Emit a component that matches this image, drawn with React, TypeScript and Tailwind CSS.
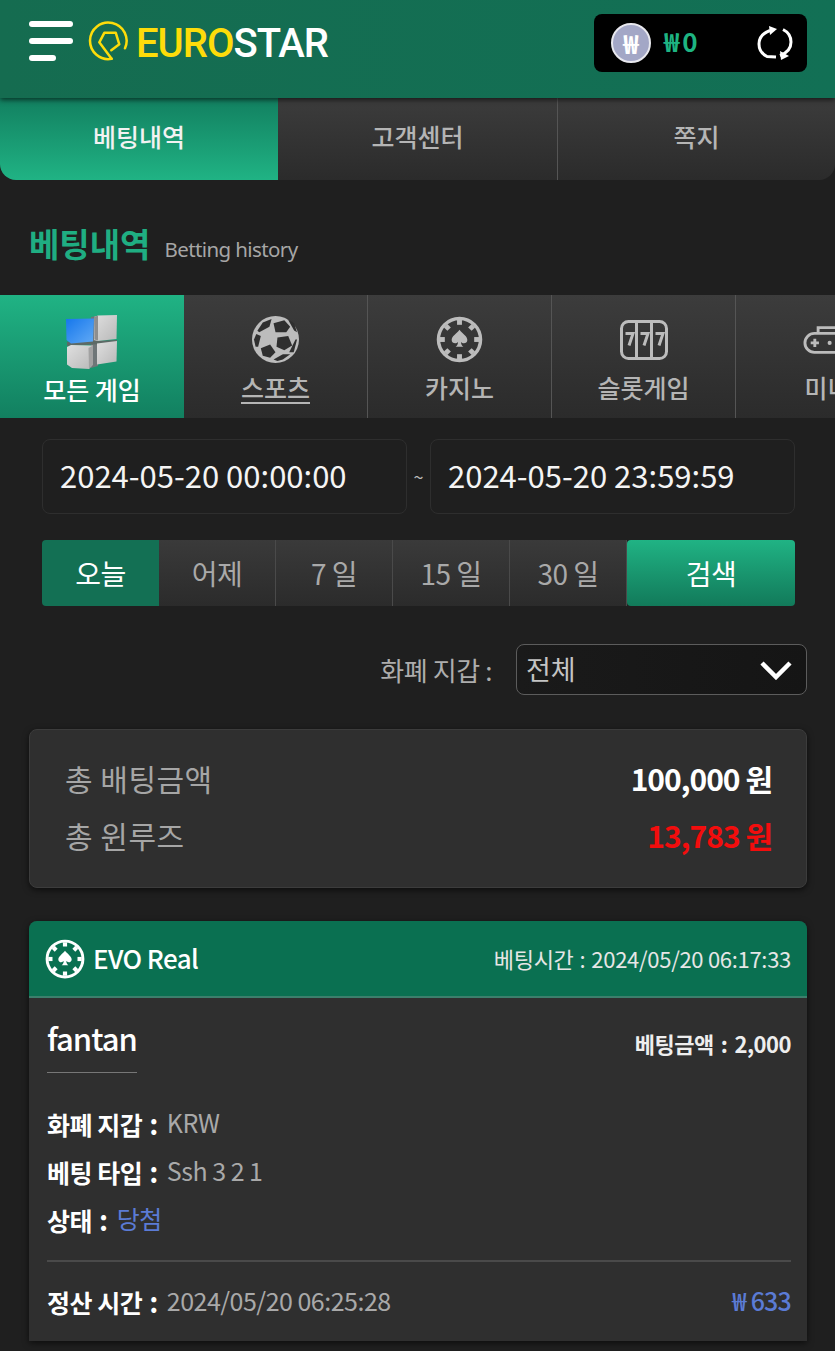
import React from 'react';

const font = { fontFamily: '"Noto Sans CJK KR", "Noto Sans", sans-serif' };

const ChipIcon: React.FC<{ className?: string }> = ({ className }) => (
    <svg viewBox="0 0 48 48" className={className} fill="none">
        <circle cx="24" cy="24" r="21.500" stroke="currentColor" strokeWidth="3.500" />
        {[0, 45, 90, 135, 180, 225, 270, 315].map(deg => (
            <rect key={deg} x="21.500" y="4" width="5" height="5" fill="currentColor" transform={`rotate(${deg} 24 24)`} />
        ))}
        <path d="M24 14c3 4 8 6.500 8 10.500 0 3.500-4.500 4.500-6.500 2 .2 2.500 1 4 2.500 5h-8c1.500-1 2.300-2.500 2.500-5-2 2.500-6.500 1.500-6.500-2C16 20.500 21 18 24 14z" fill="currentColor" />
    </svg>
);

const SoccerIcon = () => (
    <svg viewBox="0 0 48 48" className="w-[47px] h-[47px] text-[#bcbcbc]">
        <circle cx="24" cy="24" r="24" fill="currentColor" />
        <g fill="#2f2f2f">
            <path d="M22 7.400L33 4.400l6 6.600-4 5.700H24z" />
            <path d="M5.500 15L11 6.700 20 3l-2.200 8-10.400 5.700z" />
            <path d="M26 22l11-1.600L41 30l-8 5-8-3.500z" />
            <path d="M9 33l9.500-4L24 37l-5.500 5.600L11 40.700z" />
            <path d="M2 24l2.400-5.500L9 20.400 6.300 31.500H3.700z" />
            <path d="M35 2l8 5.400 3 9.300-3-2-6-10.500z" />
            <path d="M44.400 24H46l-3.400 13H38z" />
            <path d="M22 44.400L31.500 39H39l-7.500 5.400L26 46z" />
        </g>
    </svg>
);

const SlotIcon = () => (
    <svg viewBox="0 0 48 40" className="w-[48px] h-[40px] text-[#bcbcbc]" fill="none">
        <rect x="1.500" y="1.500" width="45" height="37" rx="7" stroke="currentColor" strokeWidth="3" />
        <path d="M16.500 2v36M31.500 2v36" stroke="currentColor" strokeWidth="3" />
        <path d="M5.500 13.500h7.500l-4 12M20.500 13.500h7.500l-4 12M35.500 13.500h7.500l-4 12" stroke="currentColor" strokeWidth="3" />
    </svg>
);

const PadIcon = () => (
    <svg viewBox="0 0 60 34" className="w-[50px] h-[28px] text-[#bcbcbc]" fill="none">
        <rect x="2" y="9" width="56" height="23" rx="11.500" stroke="currentColor" strokeWidth="3.500" />
        <path d="M18 9V2h24v7" stroke="currentColor" strokeWidth="3.500" />
        <path d="M9 20.500h10M14 15.500v10" stroke="currentColor" strokeWidth="3.500" />
        <circle cx="32" cy="20.500" r="2.500" fill="currentColor" />
    </svg>
);

const CubesIcon = () => (
    <svg viewBox="0 0 54 56" className="w-[54px] h-[56px]">
        <defs>
            <linearGradient id="blue" x1="0" y1="0" x2="1" y2="1">
                <stop offset="0" stopColor="#1577ec" />
                <stop offset="1" stopColor="#62aaf5" />
            </linearGradient>
            <linearGradient id="grey" x1="0" y1="0" x2="1" y2="1">
                <stop offset="0" stopColor="#dfdfdf" />
                <stop offset="1" stopColor="#b9b9b9" />
            </linearGradient>
        </defs>
        <path d="M26 3l6-1 1 50-7 2z" fill="#6f7678" />
        <path d="M2 28l50-2v3l-50 3z" fill="#5d6a66" />
        <path d="M1 5l28-.5-1 23L6 29.500 1.500 26z" fill="url(#blue)" />
        <path d="M29 3l4-1.500 19-.5-.5 24-19 2-3.500-1z" fill="url(#grey)" />
        <path d="M29 3l4-1.500v25l-3.500-1z" fill="#8e8e8e" />
        <path d="M2 33l4-2 22 .5 0 19-4 4.500-17-1-5-3.500z" fill="url(#grey)" />
        <path d="M28 31.500v19l-4 4.500-.5-21z" fill="#a2a2a2" />
        <path d="M32 29.500l20-2.500-.5 20.500-19.500 3z" fill="url(#grey)" />
    </svg>
);

const gameTabs = [
    { label: '스포츠', icon: <SoccerIcon /> },
    { label: '카지노', icon: <ChipIcon className="w-[47px] h-[47px] text-[#bcbcbc]" /> },
    { label: '슬롯게임', icon: <SlotIcon /> },
    { label: '미니', icon: <PadIcon /> },
];

const dayButtons = ['어제', '7 일', '15 일', '30 일'];

const infoRows = [
    { label: '화폐 지갑', value: 'KRW', color: 'text-[#a9a9a9]' },
    { label: '베팅 타입', value: 'Ssh 3 2 1', color: 'text-[#a9a9a9]' },
    { label: '상태', value: '당첨', color: 'text-[#5b7bd5]' },
];

export default function App() {
    return (
        <div style={font} className="w-[835px] h-[1351px] overflow-hidden bg-[#1f1f1f] text-white">
            <header className="relative z-10 h-[98px] flex items-start bg-gradient-to-r from-[#156c50] to-[#127055] shadow-[0_2px_5px_rgba(0,0,0,0.6)]">
                <div className="mt-[21px] ml-[29px] flex flex-col gap-[11px]">
                    <div className="w-[44px] h-[6px] rounded-full bg-white" />
                    <div className="w-[44px] h-[6px] rounded-full bg-white" />
                    <div className="w-[27px] h-[6px] rounded-full bg-white" />
                </div>
                <svg viewBox="4.700 6.700 40 40" className="w-[40px] h-[40px] ml-[15px] mt-[21px] text-[#fddc0a]" fill="none" stroke="currentColor" strokeWidth="2.500" strokeLinecap="round" strokeLinejoin="round">
                    <path d="M28.300 44.500A18.300 18.300 0 1 1 41.700 34" />
                    <path d="M28.300 44.500L16 28l5-9.500h11.500L36 30l-8 6" />
                </svg>
                <div className="ml-[8px] mt-[19px] text-[40px] leading-[50px] tracking-[-1px] font-medium" style={{ fontFamily: 'Roboto, sans-serif' }}>
                    <span className="text-[#fddc0a]">EURO</span>
                    <span className="text-white">STAR</span>
                </div>
                <div className="ml-auto mr-[28px] mt-[14px] w-[213px] h-[58px] rounded-lg bg-black flex items-center pl-[17px] pr-[14px]">
                    <div className="w-[40px] h-[40px] rounded-full bg-[#a3a7c6] border-2 border-[#e8e8ee] flex items-center justify-center text-[26px] font-bold leading-none">₩</div>
                    <span className="ml-[13px] pb-[6px] text-[#1eb482] text-[26px] font-bold tracking-[3px]">₩0</span>
                    <svg viewBox="0 0 36 36" className="ml-auto w-[36px] h-[36px]" fill="none" stroke="white" strokeWidth="3">
                        <path d="M13 5.500C6 8 2 13 2 19c0 5 3 10 8 12.500l9 .5" />
                        <path d="M23 30.500c7-2.500 11-7.500 11-13.500 0-5-3-10-8-12.500" />
                        <path d="M12 1l8 3-7 6z" fill="white" stroke="none" />
                        <path d="M24 35l-1-9 9 5z" fill="white" stroke="none" />
                    </svg>
                </div>
            </header>

            <nav className="flex h-[82px] text-[25px] font-medium">
                <div className="w-[278px] pb-[4px] flex items-center justify-center rounded-bl-[16px] bg-gradient-to-b from-[#128060] to-[#20b384] text-[#f2f2f2]">베팅내역</div>
                <div className="w-[280px] pb-[4px] flex items-center justify-center border-r border-[#555] bg-gradient-to-b from-[#3c3c3c] to-[#2b2b2b] text-[#b5b5b5]">고객센터</div>
                <div className="flex-1 pb-[4px] flex items-center justify-center rounded-br-[16px] bg-gradient-to-b from-[#3c3c3c] to-[#2b2b2b] text-[#b5b5b5]">쪽지</div>
            </nav>

            <div className="h-[115px] pl-[29px] pt-[40px] flex items-baseline gap-[14px]">
                <h2 className="text-[33px] leading-[46px] font-bold text-[#1fae82]">베팅내역</h2>
                <span className="text-[20.500px] text-[#a6a6a6] tracking-[-0.6px]" style={{ fontFamily: '"Noto Sans", sans-serif' }}>Betting history</span>
            </div>

            <div className="flex h-[123px] overflow-hidden">
                <div className="w-[184px] shrink-0 flex flex-col items-center pt-[19px] bg-gradient-to-b from-[#20b384] to-[#128060]">
                    <CubesIcon />
                    <span className="mt-[1px] text-[25px] leading-[36px] font-medium text-white">모든 게임</span>
                </div>
                {gameTabs.map(tab => (
                    <div key={tab.label} className="w-[184px] shrink-0 flex flex-col items-center border-r border-[#555] bg-gradient-to-b from-[#3c3c3c] to-[#2b2b2b]">
                        <div className="h-[74px] pt-[15px] flex items-center">{tab.icon}</div>
                        <span className={`text-[25px] leading-[36px] font-medium text-[#b5b5b5] ${tab.label === '스포츠' ? 'underline underline-offset-4' : ''}`}>{tab.label}</span>
                    </div>
                ))}
            </div>

            <div className="pl-[42px] pr-[40px] pt-[21px] flex items-center">
                <div className="w-[365px] h-[75px] rounded-lg border border-[#2e2e2e] flex items-center pl-[17px] pb-[2px] text-[31px] text-[#f4f4f4]">2024-05-20 00:00:00</div>
                <span className="w-[23px] text-center text-[18px] text-[#bbb]">~</span>
                <div className="flex-1 h-[75px] rounded-lg border border-[#2e2e2e] flex items-center pl-[17px] pb-[2px] text-[31px] text-[#f4f4f4]">2024-05-20 23:59:59</div>
            </div>

            <div className="pl-[42px] pr-[40px] mt-[26px] flex h-[66px] text-[28px] tracking-[-0.5px]">
                <button className="w-[117px] rounded-l bg-[#137054] text-white">오늘</button>
                {dayButtons.map(day => (
                    <button key={day} className="w-[117px] border-r border-[#4a4a4a] bg-gradient-to-b from-[#3a3a3a] to-[#2b2b2b] text-[#a9a9a9]">{day}</button>
                ))}
                <button className="flex-1 rounded bg-gradient-to-b from-[#20b384] to-[#127a5a] text-white">검색</button>
            </div>

            <div className="pr-[28px] mt-[38px] flex items-center justify-end">
                <span className="text-[26px] text-[#adadad] tracking-[-0.4px]">화폐 지갑 :</span>
                <div className="ml-[24px] w-[291px] h-[51px] rounded-lg border border-[#5c5c5c] bg-gradient-to-r from-[#1a1a1a] to-[#151515] flex items-center justify-between pl-[9px] pr-[14px] text-[27px] text-[#c4c4c4]">
                    <span>전체</span>
                    <svg viewBox="0 0 32 20" className="w-[32px] h-[20px]" fill="none" stroke="white" strokeWidth="4.500">
                        <path d="M2 3l14 14L30 3" />
                    </svg>
                </div>
            </div>

            <section className="ml-[29px] mr-[28px] mt-[34px] h-[159px] rounded-lg border border-[#3c3c3c] bg-[#2f2f2f] shadow-[0_2px_6px_rgba(0,0,0,0.6)] pl-[35px] pr-[34px] pt-[26px] text-[30px]">
                <div className="flex items-center justify-between h-[44px]">
                    <span className="text-[#a6a6a6] tracking-[0.5px]">총 배팅금액</span>
                    <span className="font-bold text-white tracking-[-1px]">100,000 원</span>
                </div>
                <div className="mt-[13px] flex items-center justify-between h-[44px]">
                    <span className="text-[#a6a6a6] tracking-[0.5px]">총 윈루즈</span>
                    <span className="font-bold text-[#f20d0d] tracking-[-1px]">13,783 원</span>
                </div>
            </section>

            <section className="ml-[29px] mr-[28px] mt-[33px] h-[420px] rounded-t-lg bg-[#2f2f2f] shadow-[0_2px_6px_rgba(0,0,0,0.6)]">
                <div className="h-[77px] rounded-t-lg border-b-2 border-[#3c7f6c] bg-[#0a7051] flex items-center pl-[16px] pr-[16px]">
                    <ChipIcon className="w-[40px] h-[40px] text-white" />
                    <span className="ml-[8px] pb-[2px] text-[26px] font-medium tracking-[-0.6px]">EVO Real</span>
                    <span className="ml-auto text-[22px] text-[#e6e6e6] tracking-[-0.3px]">베팅시간<span className="mx-[6px]">:</span>2024/05/20 06:17:33</span>
                </div>
                <div className="pl-[18px] pr-[16px]">
                    <div className="flex justify-between items-center pt-[15px]">
                        <div className="border-b border-[#777] pb-[9px]">
                            <span className="block text-[31px] leading-[50px] font-medium tracking-[-1px]">fantan</span>
                        </div>
                        <span className="text-[22px] font-bold tracking-[-0.5px] text-[#eee]">베팅금액<span className="mx-[7px]">:</span>2,000</span>
                    </div>
                    <div className="mt-[30px] flex flex-col gap-[8px]">
                        {infoRows.map(row => (
                            <div key={row.label} className="h-[40px] flex items-center text-[25px] tracking-[-0.5px]">
                                <span className="font-bold text-white">{row.label}<span className="ml-[7px] text-[28px]">:</span></span>
                                <span className={`ml-[9px] ${row.color}`}>{row.value}</span>
                            </div>
                        ))}
                    </div>
                    <div className="mt-[21px] h-[2px] bg-[#4a4a4a]" />
                    <div className="mt-[18px] flex items-center justify-between text-[25px] tracking-[-0.5px]">
                        <div className="flex items-center">
                            <span className="font-bold text-white">정산 시간<span className="ml-[7px] text-[28px]">:</span></span>
                            <span className="ml-[9px] text-[#a9a9a9]">2024/05/20 06:25:28</span>
                        </div>
                        <span className="font-medium text-[#5b7bd5] tracking-[-0.8px]">₩ 633</span>
                    </div>
                </div>
            </section>
        </div>
    );
}
